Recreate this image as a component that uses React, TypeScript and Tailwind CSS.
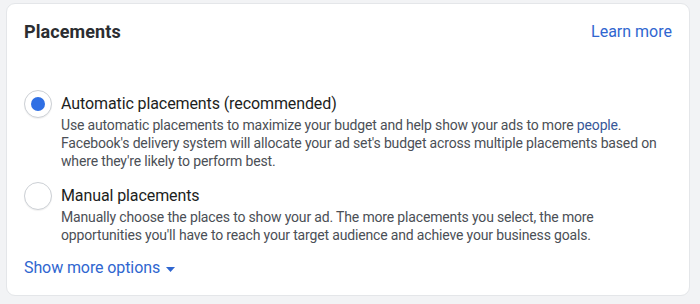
import React from "react";

function Radio({ checked }: { checked?: boolean }) {
  return (
    <div className="flex h-[28px] w-[28px] shrink-0 items-center justify-center rounded-full border border-[#ccd0d5] bg-white shadow-[0_1px_1px_rgba(0,0,0,0.06)]">
      {checked && <div className="h-[14px] w-[14px] rounded-full bg-[#2f6fe4]" />}
    </div>
  );
}

export default function App() {
  return (
    <div className="h-[304px] w-[700px] bg-[#f2f3f5] pb-[8px] pl-[6px] pr-[10px] pt-[3px] font-['Roboto',sans-serif]">
      <div className="flex h-full flex-col rounded-[9px] border border-[#e4e6e9] bg-white px-[17px] pt-[16px]">
        <div className="flex h-[24px] items-center justify-between">
          <h2 className="text-[18px] font-bold leading-[24px] tracking-[0.1px] text-[#2b2d31]">Placements</h2>
          <a className="text-[16px] leading-[20px] text-[#2f66d0]">Learn more</a>
        </div>

        <div className="mt-[50px] flex flex-col gap-[16px]">
          <div className="flex items-start gap-[9px]">
            <div className="-mt-[4px]">
              <Radio checked />
            </div>
            <div className="flex flex-col whitespace-nowrap">
              <div className="text-[16px] leading-[20px] tracking-[-0.1px] text-[#1c1e21]">Automatic placements (recommended)</div>
              <p className="mt-[2px] text-[14px] leading-[18px] tracking-[-0.16px] text-[#4b4f56]">
                Use automatic placements to maximize your budget and help show your ads to more{" "}
                <span className="text-[#385898]">people</span>.
                <br />
                Facebook's delivery system will allocate your ad set's budget across multiple placements based on
                <br />
                where they're likely to perform best.
              </p>
            </div>
          </div>

          <div className="flex items-start gap-[9px]">
            <div className="-mt-[4px]">
              <Radio />
            </div>
            <div className="flex flex-col whitespace-nowrap">
              <div className="text-[16px] leading-[20px] tracking-[-0.1px] text-[#1c1e21]">Manual placements</div>
              <p className="mt-[2px] text-[14px] leading-[18px] tracking-[-0.16px] text-[#4b4f56]">
                Manually choose the places to show your ad. The more placements you select, the more
                <br />
                opportunities you'll have to reach your target audience and achieve your business goals.
              </p>
            </div>
          </div>
        </div>

        <div className="mt-[14px] flex items-center gap-[6px] text-[16px] leading-[20px] tracking-[-0.1px] text-[#2f66d0]">
          <span>Show more options</span>
          <svg width="9" height="5" viewBox="0 0 9 5" className="mt-[2px]">
            <path d="M0 0h9L4.5 5z" fill="#2f66d0" />
          </svg>
        </div>
      </div>
    </div>
  );
}
